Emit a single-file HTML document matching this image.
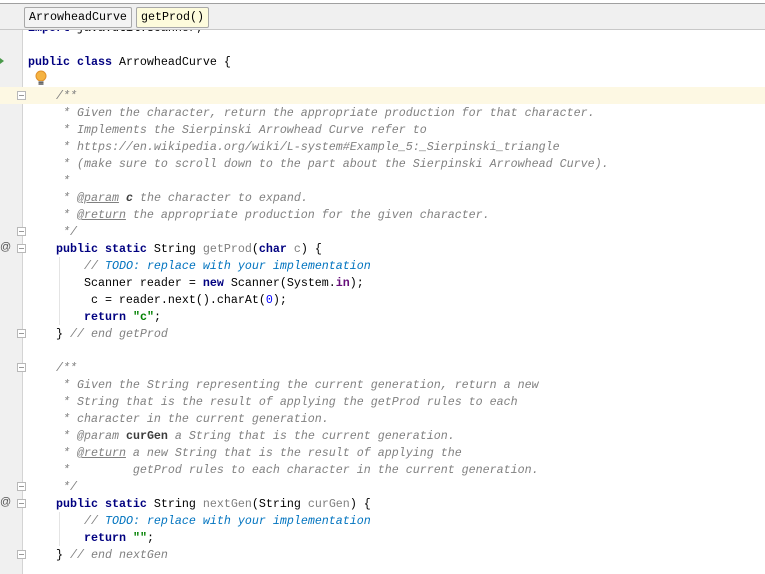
<!DOCTYPE html>
<html><head><meta charset="utf-8"><style>
html,body{margin:0;padding:0;background:#fff;width:765px;height:574px;overflow:hidden;position:relative}
.gut{position:absolute;left:0;top:30px;width:22px;height:544px;background:#f0f0f0;border-right:1px solid #d4d4d4}
.hl{position:absolute;left:0;top:87px;width:765px;height:17px;background:#fdf8e3}
.hdr{position:absolute;left:0;width:765px;background:#f0f0f0;border-top:1px solid #a0a0a0;border-bottom:1px solid #c8c8c8;box-sizing:border-box;top:3px;height:27px;z-index:3}
.hdrtop{position:absolute;left:0;top:0;width:765px;height:3px;background:#fff;z-index:3}
.bc{position:absolute;top:3px;height:19px;border:1px solid #a8a8a8;border-radius:2px;font:11.67px "Liberation Mono",monospace;line-height:19px;padding:0 4px;color:#000;background:#f4f4f4}
pre{position:absolute;left:28px;top:20px;margin:0;font:11.67px "Liberation Mono",monospace;line-height:17px;color:#000;z-index:1}
.k{color:#000080;font-weight:bold}
.c{color:#808080;font-style:italic}
.t{color:#0073bf;font-style:italic}
.s{color:#008000;font-weight:bold}
.n{color:#0000ff}
.p{color:#660e7a;font-weight:bold}
.g{color:#808080}
.tag{color:#808080;font-style:italic;text-decoration:underline}
.tag2{color:#808080;font-style:italic}
.pv{color:#3d3d3d;font-weight:bold;font-style:italic}
.pv2{color:#3d3d3d;font-weight:bold;font-style:normal}
.fold{position:absolute;left:17px;width:9px;height:9px;border:1px solid #b8b8b8;background:#fff;box-sizing:border-box;z-index:2}
.fold:after{content:"";position:absolute;left:1px;top:3px;width:5px;height:1px;background:#999}
.at{position:absolute;left:0;font:11px "Liberation Sans",sans-serif;color:#555;z-index:2}
.vl{position:absolute;left:59px;width:1px;background:#e4e4e4;z-index:0}
</style></head><body>
<div class="gut"></div>
<div class="hl"></div>
<div class="vl" style="top:257px;height:68px"></div>
<div class="vl" style="top:512px;height:34px"></div>
<pre><span class="k">import</span> java.util.Scanner;

<span class="k">public class</span> ArrowheadCurve {

    <span class="c">/**</span>
<span class="c">     * Given the character, return the appropriate production for that character.</span>
<span class="c">     * Implements the Sierpinski Arrowhead Curve refer to</span>
<span class="c">     * https://en.wikipedia.org/wiki/L-system#Example_5:_Sierpinski_triangle</span>
<span class="c">     * (make sure to scroll down to the part about the Sierpinski Arrowhead Curve).</span>
<span class="c">     *</span>
<span class="c">     * <span class="tag">@param</span> <span class="pv">c</span> the character to expand.</span>
<span class="c">     * <span class="tag">@return</span> the appropriate production for the given character.</span>
<span class="c">     */</span>
    <span class="k">public static</span> String <span class="g">getProd</span>(<span class="k">char</span> <span class="g">c</span>) {
        <span class="c">// </span><span class="t">TODO: replace with your implementation</span>
        Scanner reader = <span class="k">new</span> Scanner(System.<span class="p">in</span>);
         c = reader.next().charAt(<span class="n">0</span>);
        <span class="k">return</span> <span class="s">"c"</span>;
    } <span class="c">// end getProd</span>

    <span class="c">/**</span>
<span class="c">     * Given the String representing the current generation, return a new</span>
<span class="c">     * String that is the result of applying the getProd rules to each</span>
<span class="c">     * character in the current generation.</span>
<span class="c">     * <span class="tag2">@param</span> <span class="pv2">curGen</span> a String that is the current generation.</span>
<span class="c">     * <span class="tag">@return</span> a new String that is the result of applying the</span>
<span class="c">     *         getProd rules to each character in the current generation.</span>
<span class="c">     */</span>
    <span class="k">public static</span> String <span class="g">nextGen</span>(String <span class="g">curGen</span>) {
        <span class="c">// </span><span class="t">TODO: replace with your implementation</span>
        <span class="k">return</span> <span class="s">""</span>;
    } <span class="c">// end nextGen</span>
</pre>
<div class="hdrtop"></div>
<div class="hdr">
<div class="bc" style="left:24px">ArrowheadCurve</div>
<div class="bc" style="left:136px;background:#fdfbdc">getProd()</div>
</div>
<svg style="position:absolute;left:35px;top:70px;z-index:2" width="12" height="18" viewBox="0 0 12 18"><circle cx="6" cy="6" r="5" fill="#f5b342" stroke="#e0902a" stroke-width="1"/><rect x="3.5" y="11" width="5" height="4" fill="#9a9a9a"/><line x1="3.5" y1="12.5" x2="8.5" y2="12.5" stroke="#666"/><line x1="3.5" y1="14" x2="8.5" y2="14" stroke="#666"/></svg>
<div style="position:absolute;left:0;top:58px;width:0;height:0;border-left:4px solid #4a9a4a;border-top:3px solid transparent;border-bottom:3px solid transparent;z-index:2"></div>
<div class="fold" style="top:91px"></div>
<div class="fold" style="top:227px"></div>
<div class="fold" style="top:244px"></div>
<div class="fold" style="top:329px"></div>
<div class="fold" style="top:363px"></div>
<div class="fold" style="top:482px"></div>
<div class="fold" style="top:499px"></div>
<div class="fold" style="top:550px"></div>
<div class="at" style="top:241px">@</div>
<div class="at" style="top:496px">@</div>
</body></html>
